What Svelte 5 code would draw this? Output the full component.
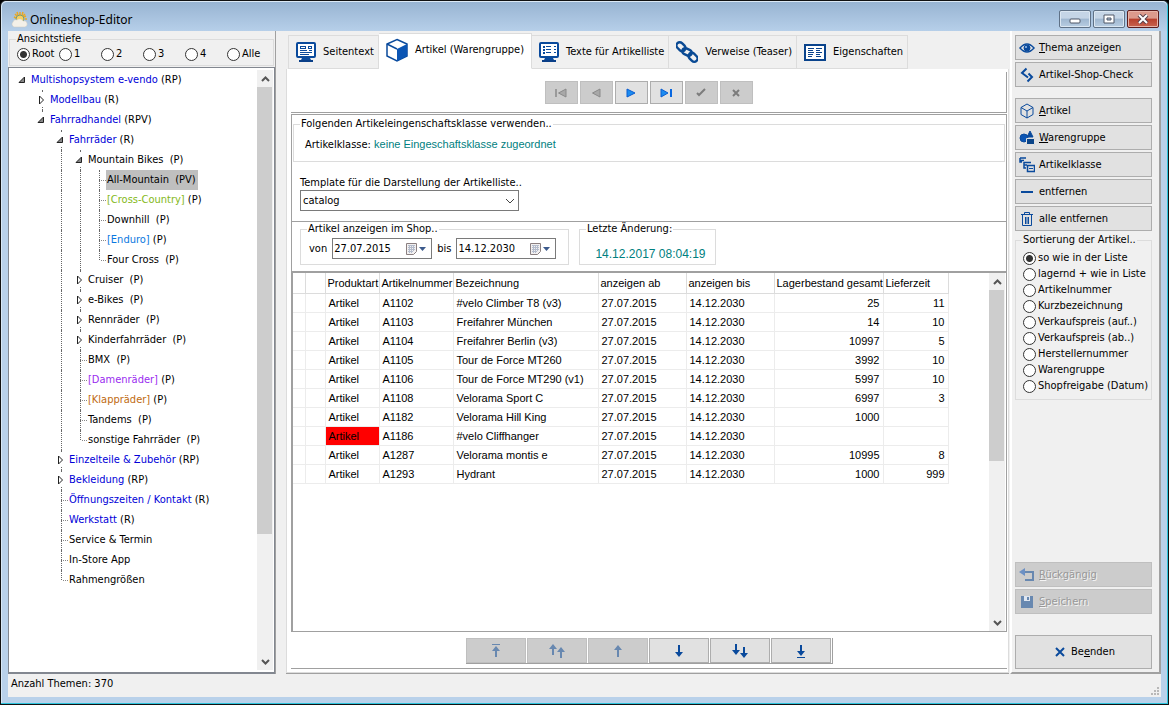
<script>
    let depth = $state("Root");
    let sorting = $state("so wie in der Liste");
    let template = $state("catalog");
    let dateFrom = $state("27.07.2015");
    let dateTo = $state("14.12.2030");
    let activeTab = $state("cube");
    let selected = $state("All-Mountain");

    const depths = ["Root", "1", "2", "3", "4", "Alle"];

    const blue = "#0000d8";

    // level, label, type suffix, state of the arrow, label colour
    const nodes = [
        [0, "Multishopsystem e-vendo", " (RP)", "open", blue],
        [1, "Modellbau", " (R)", "closed", blue],
        [1, "Fahrradhandel", " (RPV)", "open", blue],
        [2, "Fahrräder", " (R)", "open", blue],
        [3, "Mountain Bikes", "  (P)", "open", "#000"],
        [4, "All-Mountain", "  (PV)", "", "#000"],
        [4, "[Cross-Country]", " (P)", "", "#84b818"],
        [4, "Downhill", "  (P)", "", "#000"],
        [4, "[Enduro]", " (P)", "", "#0a78e0"],
        [4, "Four Cross", "  (P)", "", "#000"],
        [3, "Cruiser", "  (P)", "closed", "#000"],
        [3, "e-Bikes", "  (P)", "closed", "#000"],
        [3, "Rennräder", "  (P)", "closed", "#000"],
        [3, "Kinderfahrräder", "  (P)", "closed", "#000"],
        [3, "BMX", "  (P)", "", "#000"],
        [3, "[Damenräder]", " (P)", "", "#9a2cf0"],
        [3, "[Klappräder]", " (P)", "", "#c06a10"],
        [3, "Tandems", "  (P)", "", "#000"],
        [3, "sonstige Fahrräder", "  (P)", "", "#000"],
        [2, "Einzelteile & Zubehör", " (RP)", "closed", blue],
        [2, "Bekleidung", " (RP)", "closed", blue],
        [2, "Öffnungszeiten / Kontakt", " (R)", "", blue],
        [2, "Werkstatt", " (R)", "", blue],
        [2, "Service & Termin", "", "", "#000"],
        [2, "In-Store App", "", "", "#000"],
        [2, "Rahmengrößen", "", "", "#000"],
    ];

    // does the given level go on below row i?
    function continues(i, level) {
        for (let j = i + 1; j < nodes.length; j++) {
            if (nodes[j][0] < level) return false;
            if (nodes[j][0] === level) return true;
        }
        return false;
    }

    const tree = nodes.map(([level, label, suffix, arrow, color], i) => ({
        label,
        suffix,
        arrow,
        color,
        guides: Array.from({ length: level + 1 }, (_, l) => ({
            own: l === level,
            up: l > 0 && l === level,
            down: l > 0 && continues(i, l),
        })),
    }));

    const tabs = [
        ["page", "Seitentext"],
        ["cube", "Artikel (Warengruppe)"],
        ["list", "Texte für Artikelliste"],
        ["chain", "Verweise (Teaser)"],
        ["props", "Eigenschaften"],
    ];

    const navButtons = [
        ["first", "Erster", true],
        ["prev", "Zurück", true],
        ["next", "Weiter", false],
        ["last", "Letzter", false],
        ["check", "Übernehmen", true],
        ["cancel", "Abbrechen", true],
    ];

    const moveButtons = [
        ["top", "Ganz nach oben", true],
        ["up2", "Mehrere nach oben", true],
        ["up", "Nach oben", true],
        ["down", "Nach unten", false],
        ["down2", "Mehrere nach unten", false],
        ["bottom", "Ganz nach unten", false],
    ];

    const articles = [
        ["A1102", "#velo Climber T8 (v3)", "25", "11"],
        ["A1103", "Freifahrer München", "14", "10"],
        ["A1104", "Freifahrer Berlin (v3)", "10997", "5"],
        ["A1105", "Tour de Force MT260", "3992", "10"],
        ["A1106", "Tour de Force MT290 (v1)", "5997", "10"],
        ["A1108", "Velorama Sport C", "6997", "3"],
        ["A1182", "Velorama Hill King", "1000", ""],
        ["A1186", "#velo Cliffhanger", "", ""],
        ["A1287", "Velorama montis e", "10995", "8"],
        ["A1293", "Hydrant", "1000", "999"],
    ];

    // icon, accelerator, rest of the label
    const topActions = [
        ["eye", "T", "hema anzeigen"],
        ["shopcheck", "", "Artikel-Shop-Check"],
    ];
    const articleActions = [
        ["box", "A", "rtikel"],
        ["shapes", "W", "arengruppe"],
        ["classes", "", "Artikelklasse"],
        ["minus", "", "entfernen"],
        ["trash", "", "alle entfernen"],
    ];

    const sortings = [
        "so wie in der Liste",
        "lagernd + wie in Liste",
        "Artikelnummer",
        "Kurzbezeichnung",
        "Verkaufspreis (auf..)",
        "Verkaufspreis (ab..)",
        "Herstellernummer",
        "Warengruppe",
        "Shopfreigabe (Datum)",
    ];
</script>

{#snippet tabIcon(name)}
    {#if name === "page" || name === "list"}
        <svg width="20" height="20" viewBox="0 0 20 20">
            <rect x="1" y="1" width="18" height="14" rx="1" fill="#fff" stroke="#0a4a9c" stroke-width="2" />
            <path d="M6 16h8l1 2H5z" fill="#0a4a9c" />
            <path d="M3 18h14v2H3z" fill="#0a3f88" />
            {#if name === "page"}
                <path d="M4 8.500h7M4 10.500h12M4 12.500h9M13 8.500h3" stroke="#0a4a9c" fill="none" />
                <rect x="4.500" y="4.500" width="5" height="2" fill="none" stroke="#0a4a9c" />
                <rect x="12.500" y="4.500" width="3" height="2" fill="none" stroke="#0a4a9c" />
            {:else}
                <path d="M4 5h2M4 8h2M4 11h2" stroke="#0a4a9c" stroke-width="2" />
                <path d="M7 4.500h5M7 7.500h5M7 10.500h5M15 4.500h2M15 7.500h2M15 10.500h2" stroke="#0a4a9c" />
            {/if}
        </svg>
    {:else if name === "cube"}
        <svg width="22" height="24" viewBox="0 0 22 24">
            <path d="M11 1.500 21 6v12l-10 5L1 18V6z" fill="#fff" stroke="#0a4a9c" stroke-width="1.500" />
            <path d="M11 11l10-5v12l-10 5z" fill="#0b55b4" />
            <path d="M1 6l10 5" stroke="#0a4a9c" stroke-width="1.500" />
        </svg>
    {:else if name === "chain"}
        <svg width="22" height="22" viewBox="0 0 22 22" fill="none" stroke="#0a4a94" stroke-width="2.400">
            <rect x="0" y="2.500" width="10" height="6.500" rx="3.200" transform="rotate(45 5 5.700)" />
            <rect x="6" y="8" width="10" height="6" rx="3" transform="rotate(25 11 11)" />
            <rect x="12" y="13" width="10" height="6.500" rx="3.200" transform="rotate(45 17 16.300)" />
        </svg>
    {:else}
        <svg width="22" height="17" viewBox="0 0 22 17" fill="none" stroke="#0a438c">
            <rect x="1" y="1" width="20" height="15" fill="#fff" stroke-width="2" />
            <path d="M4 4.500h6M4 6.500h5M4 8.500h6M4 10.500h5M4 12.500h4M12 4.500h6M12 6.500h4M12 8.500h6M12 10.500h4M12 12.500h5" />
        </svg>
    {/if}
{/snippet}

{#snippet navIcon(name)}
    <svg width="14" height="10" viewBox="0 0 14 10">
        {#if name === "first"}
            <path d="M2 1v8" stroke="#8a8a8a" stroke-width="1.500" />
            <path d="M12 1v8L4.500 5z" fill="#a8a8a8" stroke="#8a8a8a" />
        {:else if name === "prev"}
            <path d="M11 1v8L3.500 5z" fill="#a8a8a8" stroke="#8a8a8a" />
        {:else if name === "next"}
            <path d="M3 1v8l8-4z" fill="#1c8cf0" stroke="#0a5cd0" />
        {:else if name === "last"}
            <path d="M2 1v8l7-4z" fill="#1c8cf0" stroke="#0a5cd0" />
            <path d="M12 1v8" stroke="#0a68e0" stroke-width="2" />
        {:else if name === "check"}
            <path d="M3 5l2 2 6-6" fill="none" stroke="#7c7c7c" stroke-width="2" />
        {:else}
            <path d="M4 2l6 6M10 2L4 8" stroke="#7c7c7c" stroke-width="2" />
        {/if}
    </svg>
{/snippet}

{#snippet moveIcon(name)}
    <svg width="18" height="16" viewBox="0 0 18 16" fill="currentColor">
        {#if name === "top"}
            <path d="M5 1h8v1H5zM9 3l4 5h-3v6H8V8H5z" />
        {:else if name === "up2"}
            <path d="M5 1l4 5H6v6H4V6H1zM13 4l4 5h-3v6h-2V9H9z" />
        {:else if name === "up"}
            <path d="M9 2l4 5h-3v7H8V7H5z" />
        {:else if name === "down"}
            <path d="M9 14l4-5h-3V2H8v7H5z" />
        {:else if name === "down2"}
            <path d="M5 12l4-5H6V1H4v6H1zM13 15l4-5h-3V4h-2v6H9z" />
        {:else}
            <path d="M5 14h8v1H5zM9 13l4-5h-3V2H8v6H5z" />
        {/if}
    </svg>
{/snippet}

{#snippet actionIcon(name)}
    <svg width="16" height="16" viewBox="0 0 16 16" fill="none" stroke="#0a4a9c">
        {#if name === "eye"}
            <path d="M1 8q7-8 14 0q-7 8-14 0z" stroke-width="1.500" />
            <circle cx="8" cy="8" r="3" fill="#0a4a9c" />
            <circle cx="7" cy="7" r="1" fill="#9cc4f0" stroke="none" />
        {:else if name === "shopcheck"}
            <path d="M7.500 1.500L3 6l6 4.500" stroke-width="2" />
            <path d="M8.500 14.500L13 10 9.500 6.500" stroke-width="2" />
        {:else if name === "box"}
            <path d="M8 1l6 3.500v7L8 15l-6-3.500v-7zM2 4.500L8 8l6-3.500M8 8v7" />
        {:else if name === "shapes"}
            <path d="M11 1l3 6H8z" fill="#0a4a9c" />
            <circle cx="5" cy="8" r="4" fill="#0b55b4" />
            <path d="M7.500 8.500h8v6h-8z" fill="#0a4488" stroke="#e1e1e1" />
        {:else if name === "classes"}
            <path d="M1 1h6M1 3.500h4M1 1v4h2M5 5.500h7M5 8h3M5 5v6h2" stroke-width="1.500" />
            <rect x="8.500" y="8.500" width="7" height="6" stroke-width="1.500" />
            <path d="M10 11.500h4" />
        {:else if name === "minus"}
            <path d="M2 8h12" stroke-width="2" />
        {:else if name === "trash"}
            <path d="M2 3.500h12M5.500 3V1.500h5V3M3.500 4v10.500h9V4M6.500 6v7M9.500 6v7M8 6v7" />
        {:else if name === "undo"}
            <path d="M4 5h10v8H6" stroke="#6888b0" stroke-width="2" />
            <path d="M0 5l6-4v8z" fill="#6c90c4" stroke="none" />
        {:else if name === "save"}
            <path d="M2 2h12v12H2z" fill="#6888b0" stroke="none" />
            <path d="M5 2h6v5H5z" fill="#dfe6f0" stroke="none" />
            <path d="M8 3h2v3H8z" fill="#6888b0" stroke="none" />
        {:else}
            <path d="M4 4l8 8M12 4l-8 8" stroke-width="2" />
        {/if}
    </svg>
{/snippet}

{#snippet scrollbar(size, rest)}
    <div class="scrollbar">
        <button class="scroll-arrow" aria-label="Nach oben scrollen">
            <svg width="9" height="6" viewBox="0 0 9 6"><path d="M1 5l3.500-3.500L8 5" fill="none" stroke="#555" stroke-width="2" /></svg>
        </button>
        <div class="thumb" style="flex-grow: {size}"></div>
        <div style="flex-grow: {rest}"></div>
        <button class="scroll-arrow" aria-label="Nach unten scrollen">
            <svg width="9" height="6" viewBox="0 0 9 6"><path d="M1 1l3.500 3.500L8 1" fill="none" stroke="#555" stroke-width="2" /></svg>
        </button>
    </div>
{/snippet}

{#snippet datePicker(label, value)}
    <span class="date-box">
        <input type="text" aria-label={label} {value} />
        <button aria-label="Kalender öffnen">
            <svg width="22" height="14" viewBox="0 0 22 14">
                <path d="M1.500 1.500h10v8l-3 3h-7z" fill="#f2f0f0" stroke="#8a7f80" />
                <path d="M3 3.500h7M3 5.500h7M3 7.500h7M3 9.500h5M4.500 3v8M6.500 3v8M8.500 3v6" stroke="#b4bccc" />
                <path d="M14 5h7l-3.500 4z" fill="#3c5a8c" />
            </svg>
        </button>
    </span>
{/snippet}

<main class="window">
    <header class="titlebar">
        <svg width="18" height="18" viewBox="0 0 18 18">
            <path d="M10 1v3M5 3l2 2M15 3l-2 2M17 8h-2M4 6l2 1M16 5l-2 1M7 1l1 3M13 1l-1 3" stroke="#f0a81c" stroke-width="1.500" />
            <circle cx="10" cy="8" r="4" fill="#f8d060" stroke="#7c9c70" />
            <path d="M4 16a3 3 0 0 1-1-5 3 3 0 0 1 4-2 4 4 0 0 1 6 1 3 3 0 0 1 2 6z" fill="#f4f0e8" stroke="#cfcac0" stroke-width=".5" />
        </svg>
        <h1>Onlineshop-Editor</h1>
        <div class="window-buttons">
            <button aria-label="Minimieren">
                <svg width="12" height="10" viewBox="0 0 12 10"><rect x="1" y="5" width="10" height="4" rx="1" fill="#fff" stroke="#505868" /></svg>
            </button>
            <button aria-label="Maximieren">
                <svg width="12" height="10" viewBox="0 0 12 10"><path d="M1 1h10v8H1zM4 4v2h4V4z" fill="#fff" fill-rule="evenodd" stroke="#505868" /></svg>
            </button>
            <button class="close" aria-label="Schließen">
                <svg width="12" height="10" viewBox="0 0 12 10"><path d="M2 1l8 8M10 1L2 9" stroke="#58404a" stroke-width="4" /><path d="M2 1l8 8M10 1L2 9" stroke="#fff" stroke-width="2" /></svg>
            </button>
        </div>
    </header>

    <div class="client">
        <div class="columns">
            <aside class="left">
                <fieldset class="depth">
                    <legend>Ansichtstiefe</legend>
                    <div class="depth-options">
                        {#each depths as d}
                            <label><input type="radio" name="depth" value={d} bind:group={depth} />{d}</label>
                        {/each}
                    </div>
                </fieldset>

                <div class="tree-box">
                    <ul class="tree">
                        {#each tree as node}
                            <li>
                                {#each node.guides as guide}
                                    <span class="guide" class:up={guide.up} class:down={guide.down} class:branch={guide.up && !node.arrow}>
                                        {#if guide.own && node.arrow}
                                            <svg class="arrow" width="9" height="14" viewBox="0 0 9 14">
                                                {#if node.arrow === "open"}
                                                    <path d="M6.500 4v5.500H1z" fill="#888" stroke="#222" />
                                                {:else}
                                                    <path d="M2.500 3v8L6.500 7z" fill="#fff" stroke="#222" />
                                                {/if}
                                            </svg>
                                        {/if}
                                    </span>
                                {/each}
                                <button
                                    class="node"
                                    class:selected={node.label === selected}
                                    onclick={() => (selected = node.label)}
                                ><span style="color: {node.color}">{node.label}</span>{node.suffix}</button>
                            </li>
                        {/each}
                    </ul>
                    {@render scrollbar(449, 120)}
                </div>
            </aside>

            <section class="center">
                <nav class="tabs">
                    {#each tabs as [icon, label]}
                        <button class="tab" class:active={activeTab === icon} onclick={() => (activeTab = icon)}>
                            {@render tabIcon(icon)}
                            {label}
                        </button>
                    {/each}
                </nav>

                <div class="sheet">
                    <div class="nav-row">
                        {#each navButtons as [icon, label, disabled]}
                            <button class="btn" aria-label={label} {disabled}>{@render navIcon(icon)}</button>
                        {/each}
                    </div>

                    <div class="editor">
                        <fieldset class="class-group">
                            <legend>Folgenden Artikeleingenschaftsklasse verwenden..</legend>
                            <p>Artikelklasse: <span class="teal">keine Eingeschaftsklasse zugeordnet</span></p>
                        </fieldset>

                        <div class="template">
                            <label for="template">Template für die Darstellung der Artikelliste..</label>
                            <div class="select-box">
                                <select id="template" bind:value={template}>
                                    <option>catalog</option>
                                </select>
                                <svg width="10" height="6" viewBox="0 0 10 6"><path d="M1 1l4 4 4-4" fill="none" stroke="#444" /></svg>
                            </div>
                        </div>

                        <div class="dates">
                            <fieldset class="range">
                                <legend>Artikel anzeigen im Shop..</legend>
                                <div class="range-row">
                                    <span>von</span>
                                    {@render datePicker("von", dateFrom)}
                                    <span>bis</span>
                                    {@render datePicker("bis", dateTo)}
                                </div>
                            </fieldset>
                            <fieldset class="changed">
                                <legend>Letzte Änderung:</legend>
                                <time>14.12.2017 08:04:19</time>
                            </fieldset>
                        </div>

                        <div class="grid-box">
                            <div class="grid-scroll">
                                <table>
                                    <colgroup>
                                        <col class="c-mark" /><col class="c-flag" /><col class="c-type" /><col class="c-no" />
                                        <col class="c-name" /><col class="c-date" /><col class="c-date" /><col class="c-stock" /><col class="c-time" />
                                    </colgroup>
                                    <thead>
                                        <tr>
                                            <th></th>
                                            <th></th>
                                            <th>Produktart</th>
                                            <th>Artikelnummer</th>
                                            <th>Bezeichnung</th>
                                            <th>anzeigen ab</th>
                                            <th>anzeigen bis</th>
                                            <th>Lagerbestand gesamt</th>
                                            <th>Lieferzeit</th>
                                        </tr>
                                    </thead>
                                    <tbody>
                                        {#each articles as [no, name, stock, time]}
                                            <tr>
                                                <td></td>
                                                <td></td>
                                                <td class:alert={no === "A1186"}>Artikel</td>
                                                <td>{no}</td>
                                                <td>{name}</td>
                                                <td>27.07.2015</td>
                                                <td>14.12.2030</td>
                                                <td class="num">{stock}</td>
                                                <td class="num">{time}</td>
                                            </tr>
                                        {/each}
                                    </tbody>
                                </table>
                            </div>
                            {@render scrollbar(170, 153)}
                        </div>
                    </div>

                    <div class="move-row">
                        <div class="move-buttons">
                            {#each moveButtons as [icon, label, disabled]}
                                <button class="btn" aria-label={label} {disabled}>{@render moveIcon(icon)}</button>
                            {/each}
                        </div>
                    </div>
                </div>
            </section>

            <aside class="right">
                <div class="actions">
                    {#each topActions as [icon, key, rest]}
                        <button class="btn action">{@render actionIcon(icon)}<span><u>{key}</u>{rest}</span></button>
                    {/each}
                </div>
                <div class="actions">
                    {#each articleActions as [icon, key, rest]}
                        <button class="btn action">{@render actionIcon(icon)}<span><u>{key}</u>{rest}</span></button>
                    {/each}
                </div>

                <fieldset class="sorting">
                    <legend>Sortierung der Artikel..</legend>
                    {#each sortings as s}
                        <label><input type="radio" name="sorting" value={s} bind:group={sorting} />{s}</label>
                    {/each}
                </fieldset>

                <div class="actions bottom">
                    <button class="btn action" disabled>{@render actionIcon("undo")}<span><u>R</u>ückgängig</span></button>
                    <button class="btn action" disabled>{@render actionIcon("save")}<span><u>S</u>peichern</span></button>
                </div>
                <button class="btn quit">{@render actionIcon("x")}<span>Be<u>e</u>nden</span></button>
            </aside>
        </div>

        <footer class="status">
            <span>Anzahl Themen: 370</span>
            <svg width="9" height="9" viewBox="0 0 9 9" fill="#b8b8b8">
                <path d="M6 0h2v2H6zM3 3h2v2H3zM6 3h2v2H6zM0 6h2v2H0zM3 6h2v2H3zM6 6h2v2H6z" />
            </svg>
        </footer>
    </div>
</main>

<style>
    :global(body) {
        margin: 0;
        background: #000;
    }

    * {
        box-sizing: border-box;
    }

    .window {
        display: flex;
        flex-direction: column;
        min-height: 100vh;
        padding: 0 7px 7px;
        border: 1px solid #111;
        border-radius: 6px 6px 0 0;
        background: #b9d1ea;
        color: #000;
        font-family: "DejaVu Sans Condensed", "DejaVu Sans", sans-serif;
        font-size: 11px;
        line-height: 14px;
        box-shadow:
            inset -1px -1px 0 #2cc4dc,
            inset 1px 0 0 #d8e8f6;
    }

    button,
    input,
    select {
        font: inherit;
        color: inherit;
    }

    svg {
        display: block;
        flex: none;
    }

    /* title bar */
    .titlebar {
        display: flex;
        align-items: center;
        gap: 2px;
        height: 30px;
        margin: 0 -6px;
        padding: 6px 8px 0;
        background: linear-gradient(#98b4d2, #b6cfe9);
        border-top: 1px solid #dce9f5;
        border-radius: 5px 5px 0 0;
    }

    h1 {
        flex: 1;
        margin: 0;
        font: 12px/16px "Noto Sans", sans-serif;
    }

    .window-buttons {
        display: flex;
        gap: 2px;
        padding-bottom: 2px;
    }

    .window-buttons button {
        display: grid;
        place-items: center;
        width: 32px;
        height: 18px;
        padding: 0;
        border: 1px solid #5f7186;
        border-radius: 2px;
        background: linear-gradient(#c5d5e6 45%, #9fb7d0 50%, #b8cde2);
        box-shadow: inset 0 0 0 1px #dbe7f2;
    }

    .window-buttons .close {
        border-color: #5c1d1d;
        background: linear-gradient(#dc9a8c 45%, #b8402c 50%, #c86450);
        box-shadow: inset 0 0 0 1px #e8b4a8;
    }

    .client {
        display: flex;
        flex: 1;
        flex-direction: column;
        background: #f0f0f0;
    }

    .columns {
        display: flex;
        flex: 1;
        border-right: 2px solid #a0a0a0;
    }

    fieldset {
        min-width: 0;
        margin: 0;
        padding: 0;
        border: 1px solid #dcdcdc;
    }

    legend {
        margin-left: 6px;
        padding: 0 1px;
    }

    label {
        display: flex;
        align-items: center;
    }

    input[type="radio"] {
        flex: none;
        width: 13px;
        height: 13px;
        margin: 0;
        border: 1px solid #333;
        border-radius: 50%;
        background: #fff;
        appearance: none;
    }

    input[type="radio"]:checked {
        background: radial-gradient(circle, #333 3px, #fff 4px);
    }

    /* left column */
    .left {
        display: flex;
        flex-direction: column;
        width: 268px;
        border-right: 1px solid #a0a0a0;
    }

    .depth {
        height: 34px;
        margin: 1px 1px 0;
    }

    .depth-options {
        display: flex;
        padding: 1px 0 0 7px;
    }

    .depth-options label {
        width: 42px;
        gap: 2px;
        white-space: nowrap;
    }

    .tree-box {
        display: flex;
        flex: 1;
        margin-top: 1px;
        padding: 2px 1px 2px 2px;
        border: 1px solid #828790;
        border-bottom-width: 2px;
        background: #fff;
    }

    .tree {
        flex: 1;
        margin: 0;
        padding: 0;
        list-style: none;
    }

    .tree li {
        display: flex;
        height: 20px;
    }

    .guide {
        position: relative;
        display: grid;
        flex: none;
        place-items: center;
        width: 19px;
        padding-left: 4px;
    }

    .guide.up::before,
    .guide.down::after {
        content: "";
        position: absolute;
        top: 0;
        left: 12px;
        height: 10px;
        border-left: 1px dotted #666;
    }

    .guide.down::after {
        top: 10px;
    }

    .guide:not(.up).down::after {
        top: 0;
        height: 20px;
    }

    .guide.branch {
        padding-left: 13px;
        background: linear-gradient(90deg, #888 1px, transparent 1px) 1px 10px / 2px 1px repeat-x;
        background-origin: content-box;
        background-clip: content-box;
    }

    .arrow {
        position: relative;
        z-index: 1;
        background: #fff;
    }

    .node {
        height: 20px;
        padding: 0 2px 0 1px;
        border: 0;
        background: none;
        line-height: 20px;
        white-space: pre;
    }

    .node.selected {
        background: #bfbfbf;
    }

    .scrollbar {
        display: flex;
        flex: none;
        flex-direction: column;
        width: 16px;
        background: #f0f0f0;
    }

    .scroll-arrow {
        display: grid;
        place-items: center;
        height: 17px;
        padding: 0;
        border: 0;
        background: none;
    }

    .thumb {
        width: 15px;
        background: #cdcdcd;
    }

    /* middle column */
    .center {
        display: flex;
        flex: 1;
        flex-direction: column;
        min-width: 0;
        margin-left: 10px;
        padding-top: 2px;
        border-bottom: 1px solid #a0a0a0;
    }

    .tabs {
        display: flex;
        align-items: flex-end;
        height: 36px;
        padding-left: 2px;
    }

    .tab {
        display: flex;
        align-items: center;
        height: 34px;
        padding: 0 4px 0 7px;
        gap: 7px;
        border: 1px solid #dcdcdc;
        border-left-width: 0;
        background: #f0f0f0;
        white-space: nowrap;
    }

    .tab:first-child {
        border-left-width: 1px;
    }

    .tab.active {
        position: relative;
        height: 36px;
        padding: 0 7px 2px;
        border-bottom-color: #fff;
        background: #fff;
    }

    .sheet {
        display: flex;
        flex: 1;
        flex-direction: column;
        padding: 3px 1px 3px 4px;
        border: 1px solid #dcdcdc;
        border-top: 0;
        background: #fff;
    }

    .btn {
        display: flex;
        align-items: center;
        justify-content: center;
        padding: 0;
        border: 1px solid #adadad;
        background: #e1e1e1;
        color: #0a4a9c;
    }

    .btn:disabled {
        border-color: #bfbfbf;
        background: #ccc;
        color: #6888b0;
    }

    .nav-row {
        display: flex;
        justify-content: center;
        gap: 2px;
        height: 41px;
        padding-top: 9px;
        border-right: 1px solid #a0a0a0;
        border-bottom: 1px solid #a0a0a0;
    }

    .nav-row .btn {
        width: 33px;
        height: 23px;
    }

    .editor {
        display: flex;
        flex: 1;
        flex-direction: column;
        margin-top: 1px;
        border: 1px solid #a0a0a0;
    }

    .class-group {
        height: 45px;
        margin: 2px 1px 0;
    }

    .class-group p {
        margin: 6px 0 0 11px;
    }

    .teal {
        color: #008080;
        font-family: "Liberation Sans", sans-serif;
    }

    .template {
        height: 60px;
        padding: 14px 8px 0;
        border-bottom: 1px solid #a0a0a0;
    }

    .select-box {
        display: grid;
        align-items: center;
        width: 219px;
    }

    .select-box select,
    .select-box svg {
        grid-area: 1 / 1;
    }

    .select-box svg {
        justify-self: end;
        margin-right: 4px;
        pointer-events: none;
    }

    select {
        height: 21px;
        padding: 0 2px;
        border: 1px solid #7a7a7a;
        border-radius: 0;
        background: #fff;
        appearance: none;
    }

    .dates {
        display: flex;
        gap: 10px;
        height: 49px;
        padding: 0 8px 6px;
    }

    .range {
        width: 269px;
    }

    .range-row {
        display: flex;
        align-items: center;
        gap: 5px;
        padding: 2px 0 0 8px;
    }

    .date-box {
        display: flex;
        width: 100px;
        height: 21px;
        border: 1px solid #7a7a7a;
        background: #fff;
    }

    .date-box input {
        flex: 1;
        min-width: 0;
        padding: 0 1px;
        border: 0;
        background: none;
    }

    .date-box button {
        display: grid;
        place-items: center;
        width: 30px;
        padding: 0;
        border: 0;
        background: none;
    }

    .changed {
        width: 137px;
    }

    .changed time {
        display: block;
        margin-top: 11px;
        padding-left: 6px;
        color: #008080;
        font: 12px/14px "Liberation Sans", sans-serif;
        text-align: center;
    }

    .grid-box {
        display: flex;
        flex: 1;
        padding-right: 1px;
        border-top: 2px solid #a0a0a0;
        border-left: 1px solid #a0a0a0;
    }

    .grid-scroll {
        flex: 1;
        min-width: 0;
    }

    table {
        width: 655px;
        border-collapse: collapse;
        table-layout: fixed;
        font-family: "Liberation Sans", sans-serif;
    }

    .c-mark { width: 12px; }
    .c-flag { width: 20px; }
    .c-type { width: 54px; }
    .c-no { width: 74px; }
    .c-name { width: 145px; }
    .c-date { width: 88px; }
    .c-stock { width: 109px; }
    .c-time { width: 65px; }

    th,
    td {
        height: 19px;
        padding: 0 3px;
        border-right: 1px solid #ececec;
        border-bottom: 1px solid #ececec;
        font-weight: 400;
        text-align: left;
        white-space: nowrap;
    }

    th {
        height: 20px;
        padding: 0 0 0 2px;
        border-color: #dcdcdc;
    }

    .num {
        text-align: right;
    }

    .alert {
        background: #f00;
    }

    .move-row {
        display: flex;
        justify-content: center;
        padding: 6px 0 4px;
        border-bottom: 1px solid #a0a0a0;
    }

    .move-buttons {
        display: flex;
        gap: 1px;
        padding: 0 1px 0 0;
        border-right: 1px solid #a0a0a0;
        border-bottom: 1px solid #a0a0a0;
    }

    .move-buttons .btn {
        width: 60px;
        height: 25px;
    }

    /* right column */
    .right {
        display: flex;
        flex-direction: column;
        width: 149px;
        margin-left: 1px;
        padding: 4px 7px 3px 3px;
        border-left: 2px solid #fff;
        border-bottom: 2px solid #a0a0a0;
    }

    .actions {
        display: flex;
        flex-direction: column;
        gap: 2px;
        margin-bottom: 11px;
    }

    .action {
        justify-content: flex-start;
        gap: 4px;
        height: 25px;
        padding-left: 3px;
    }

    .action span,
    .quit span {
        color: #000;
    }

    .btn:disabled span {
        color: #989898;
        text-shadow: 1px 1px 0 #f4f4f4;
    }

    .sorting {
        height: 167px;
        margin-top: -9px;
    }

    .sorting label {
        height: 16px;
        padding-left: 7px;
        gap: 2px;
        white-space: nowrap;
    }

    .sorting legend {
        margin-bottom: 3px;
    }

    .bottom {
        margin-top: auto;
        margin-bottom: 21px;
    }

    .quit {
        gap: 3px;
        height: 34px;
    }

    .status {
        display: flex;
        align-items: flex-end;
        justify-content: space-between;
        height: 23px;
        padding: 0 1px 1px 3px;
    }

    .status span {
        align-self: flex-start;
        padding-top: 3px;
    }
</style>
